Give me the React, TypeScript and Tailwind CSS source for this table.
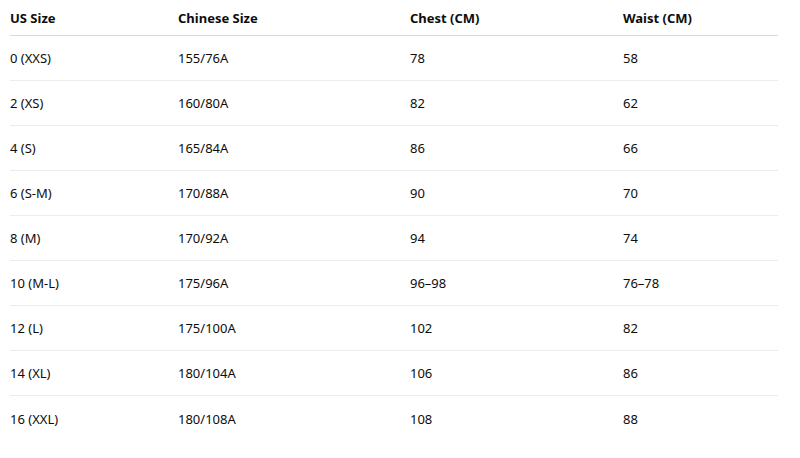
import React from 'react'

const rows = [
  ['0 (XXS)', '155/76A', '78', '58'],
  ['2 (XS)', '160/80A', '82', '62'],
  ['4 (S)', '165/84A', '86', '66'],
  ['6 (S-M)', '170/88A', '90', '70'],
  ['8 (M)', '170/92A', '94', '74'],
  ['10 (M-L)', '175/96A', '96–98', '76–78'],
  ['12 (L)', '175/100A', '102', '82'],
  ['14 (XL)', '180/104A', '106', '86'],
  ['16 (XXL)', '180/108A', '108', '88'],
]

const cols = 'grid grid-cols-[168px_232px_213px_155px]'

export default function App() {
  return (
    <main className="w-[800px] h-[458px] bg-white text-[#0d0d0d] text-[13px]" style={{ fontFamily: '"Noto Sans", "Open Sans", sans-serif' }}>
      <div className="ml-[10px] w-[768px]">
        {/* Header */}
        <div className={`${cols} h-[36px] pt-[2px] items-center border-b border-[#d9d9d9] font-bold`}>
          <div>US Size</div>
          <div>Chinese Size</div>
          <div>Chest (CM)</div>
          <div>Waist (CM)</div>
        </div>
        {/* Body */}
        {rows.map((r, i) => (
          <div
            key={i}
            className={`${cols} h-[45px] pt-[2px] items-center ${i < rows.length - 1 ? 'border-b border-[#ececec]' : ''}`}
          >
            {r.map((c, j) => (
              <div key={j}>{c}</div>
            ))}
          </div>
        ))}
      </div>
    </main>
  )
}
